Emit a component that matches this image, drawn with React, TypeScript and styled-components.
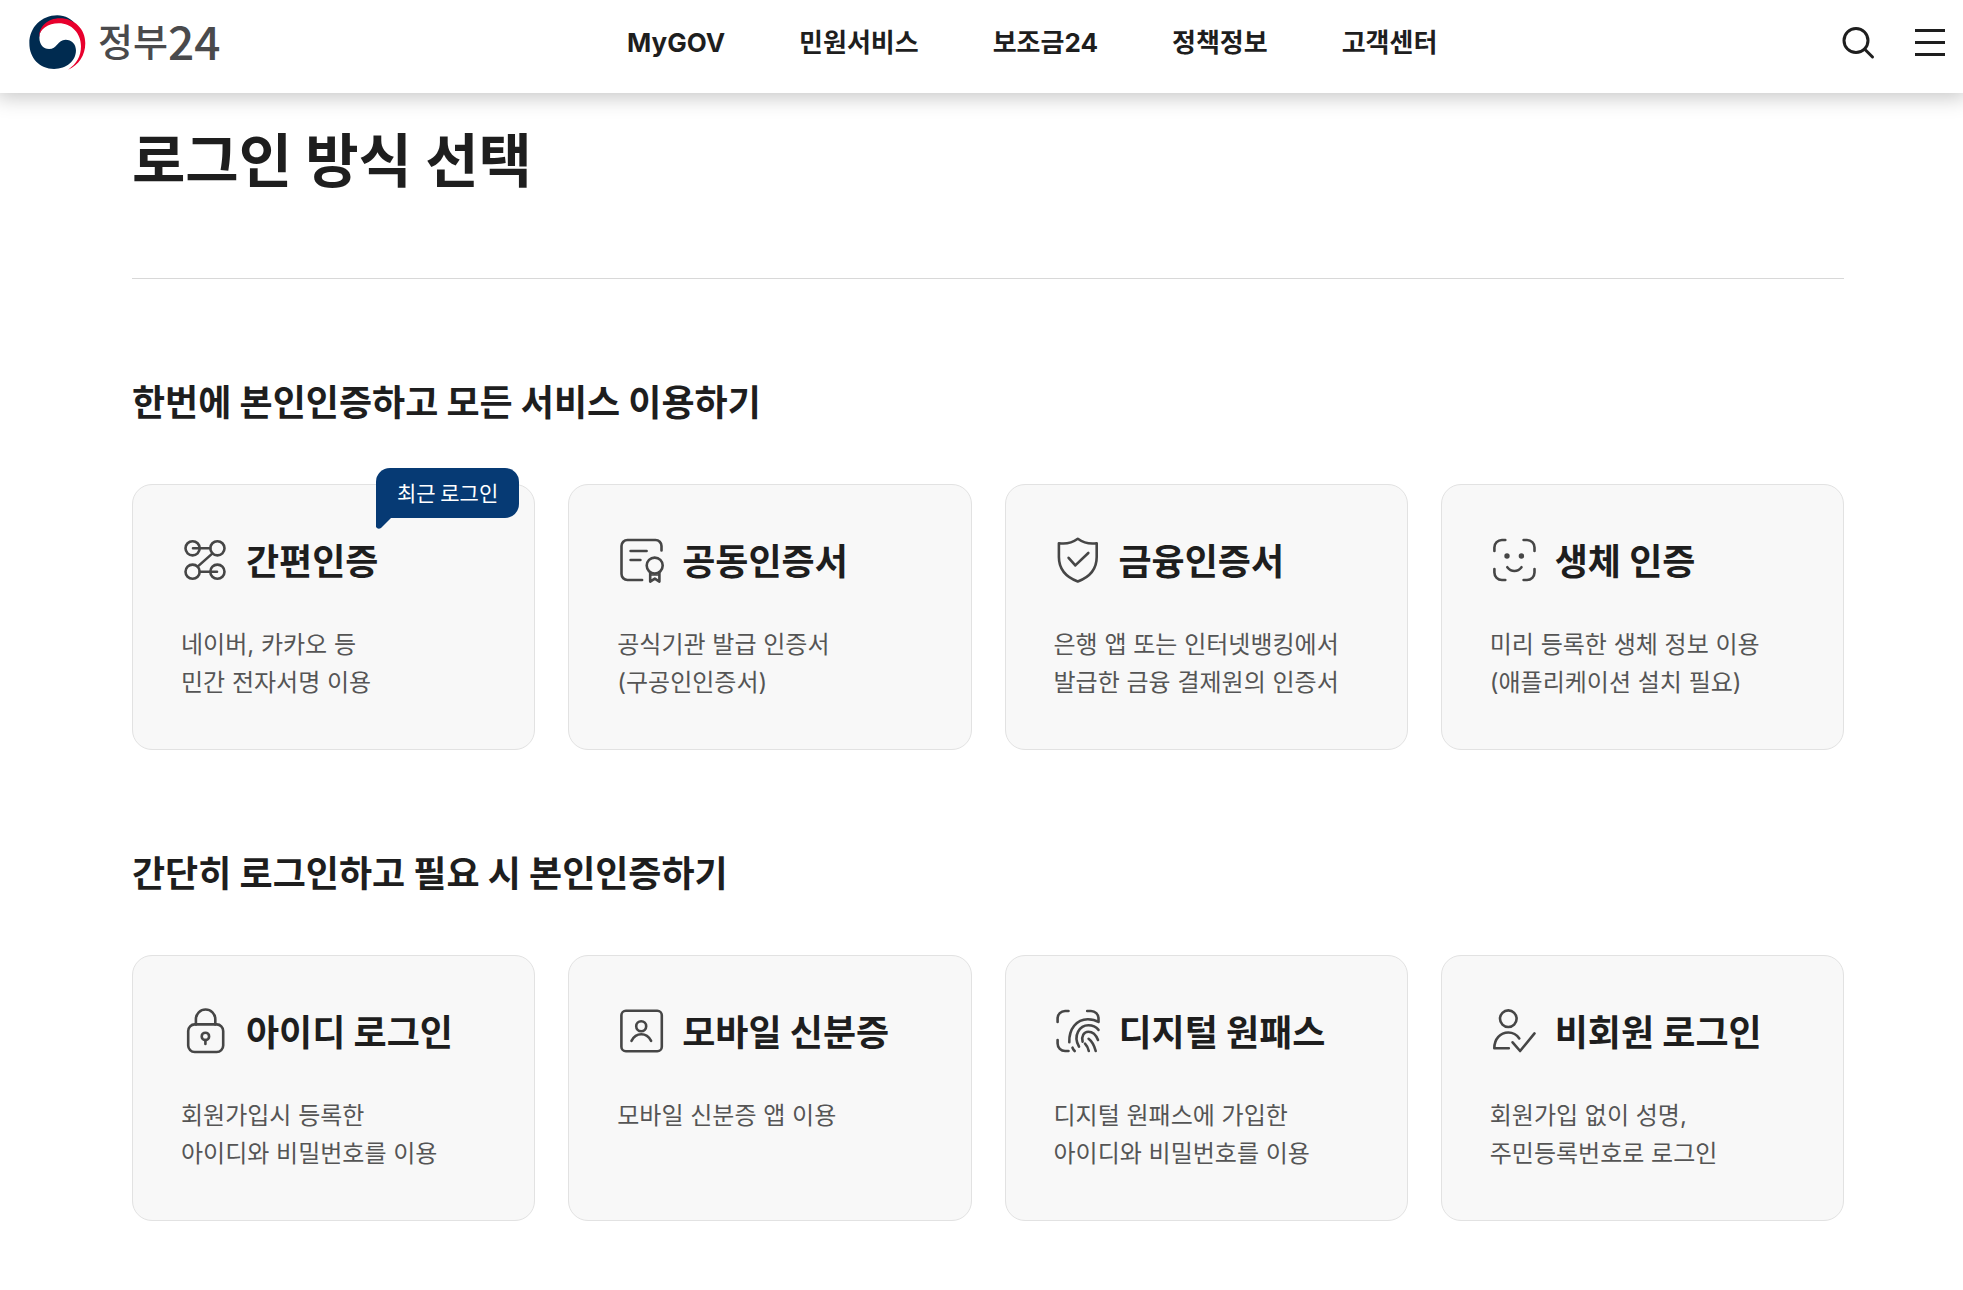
import React from 'react';
import styled, { createGlobalStyle } from 'styled-components';

const GlobalStyle = createGlobalStyle`
  *, *::before, *::after { box-sizing: border-box; }
  body {
    margin: 0;
    background: #ffffff;
    color: #1e1e1e;
    font-family: 'Noto Sans CJK KR', 'Noto Sans', sans-serif;
  }
  a { color: inherit; text-decoration: none; }
`;

const Header = styled.header`
  position: sticky;
  top: 0;
  z-index: 10;
  display: flex;
  align-items: center;
  justify-content: space-between;
  height: 93px;
  padding: 0 16px 8px 29px;
  background: #ffffff;
  box-shadow: 0 0 20px 4px rgba(0, 0, 0, 0.23);
`;

const Logo = styled.a`
  display: flex;
  align-items: center;
  gap: 12px;
  padding-right: 4px;
`;

const LogoName = styled.span`
  display: flex;
  align-items: center;
  padding-bottom: 6px;
  color: #4a4a4c;
  font-size: 38px;
  font-weight: 500;
  line-height: 54px;
`;

const LogoNumber = styled.span`
  font-size: 46px;
`;

const Nav = styled.nav`
  display: flex;
  gap: 74px;
  font-family: Inter, 'Noto Sans CJK KR', sans-serif;
  font-size: 26px;
  font-weight: 700;
  line-height: 40px;
`;

const Tools = styled.div`
  display: flex;
  gap: 35px;
`;

const IconButton = styled.button`
  display: flex;
  padding: 0;
  border: 0;
  background: none;
  color: #1e1e1e;
  cursor: pointer;
`;

const Main = styled.main`
  padding: 24px 119px 68px 132px;
`;

const Title = styled.h1`
  margin: 0;
  padding-bottom: 81px;
  border-bottom: 1px solid #d8d8d8;
  font-size: 58px;
  font-weight: 700;
  line-height: 80px;
`;

const Section = styled.section`
  padding-top: 94px;
`;

const SectionTitle = styled.h2`
  margin: 0 0 57px;
  font-size: 36px;
  font-weight: 700;
  line-height: 54px;
`;

const CardGrid = styled.div`
  display: grid;
  grid-template-columns: repeat(4, 1fr);
  gap: 33px;
`;

const Card = styled.a`
  position: relative;
  display: flex;
  flex-direction: column;
  gap: 40px;
  padding: 47px 48px;
  border: 1px solid #e2e2e2;
  border-radius: 20px;
  background: #f8f8f8;
`;

const CardHead = styled.div`
  display: flex;
  align-items: center;
  gap: 17px;
`;

const CardTitle = styled.h3`
  margin: 0;
  font-size: 36px;
  font-weight: 700;
  line-height: 54px;
  white-space: nowrap;
`;

const CardText = styled.p`
  margin: 0;
  color: #555555;
  font-family: Inter, 'Noto Sans CJK KR', sans-serif;
  font-size: 24px;
  font-weight: 400;
  line-height: 38px;
  white-space: pre-line;
`;

const Badge = styled.span`
  position: absolute;
  top: -17px;
  right: 15px;
  padding: 0 21px 2px;
  border-radius: 14px 14px 14px 0;
  background: #063a74;
  color: #ffffff;
  font-size: 21px;
  line-height: 48px;
`;

const BadgeTail = styled.svg`
  position: absolute;
  top: 100%;
  left: 0;
`;

const StrokeIcon = styled.svg`
  flex: none;
  fill: none;
  stroke: #464646;
  stroke-width: 2.6;
  stroke-linecap: round;
  stroke-linejoin: round;
`;

type IconName = 'simple' | 'joint' | 'finance' | 'face' | 'lock' | 'idcard' | 'finger' | 'guest';

const icons: Record<IconName, React.ReactNode> = {
  simple: (
    <>
      <circle cx="11.6" cy="12.3" r="7.1" />
      <circle cx="36.4" cy="12.3" r="7.1" />
      <circle cx="11.6" cy="35.7" r="7.1" />
      <circle cx="36.4" cy="35.7" r="7.1" />
      <path d="M12 12.3h17.3M18.7 35.7H36M31.5 17.4 16.6 30.6" />
    </>
  ),
  joint: (
    <>
      <path d="M44.5 14.5V10a6 6 0 0 0-6-6h-28a6 6 0 0 0-6 6v28a6 6 0 0 0 6 6h14.6" />
      <path d="M13.6 15h16M13.6 24h9.8" />
      <circle cx="37.7" cy="29.6" r="8" />
      <path d="M33.2 36.6v9l4.6-3 4.6 3v-9" />
      <path d="M33.6 39h8" strokeWidth="1.4" />
    </>
  ),
  finance: (
    <>
      <path d="M23.8 2.8C18.5 6.6 12 8.3 4.9 7.2V21c0 11.5 7.1 20.1 18.9 24.5C35.6 41.1 42.7 32.5 42.7 21V7.2C35.6 8.3 29.1 6.6 23.8 2.8Z" />
      <path d="m14.6 21.8 6.7 7.6L34.3 17" />
    </>
  ),
  face: (
    <>
      <path d="M4.4 15v-3.5A7.5 7.5 0 0 1 11.9 4h3.4M33.6 4H37a7.5 7.5 0 0 1 7.5 7.5V15M44.5 33v3.5A7.5 7.5 0 0 1 37 44h-3.4M15.3 44h-3.4a7.5 7.5 0 0 1-7.5-7.5V33" />
      <circle cx="17" cy="20" r="2.7" fill="#464646" stroke="none" />
      <circle cx="31.4" cy="20" r="2.7" fill="#464646" stroke="none" />
      <path d="M17.3 31.2c3.8 5 10.4 5 14.2 0" />
    </>
  ),
  lock: (
    <>
      <rect x="7.2" y="17.4" width="35" height="27.6" rx="6.5" />
      <path d="M14.9 17.4v-5.2a9.7 9.7 0 0 1 19.4 0v5.2" />
      <circle cx="24.4" cy="29.4" r="3.7" />
      <path d="M24.4 33.1v3.9" />
    </>
  ),
  idcard: (
    <>
      <rect x="4.4" y="3.8" width="40.4" height="40.4" rx="4.5" />
      <circle cx="24.2" cy="19.3" r="5" />
      <path d="M14.5 33.8c2.2-4.2 5.6-6.5 9.8-6.5s7.6 2.3 9.8 6.5" />
    </>
  ),
  finger: (
    <>
      <path d="M3.6 15v-3.5A7.5 7.5 0 0 1 11.1 4h3.4M33.2 4H37a7.5 7.5 0 0 1 7.5 7.5V14M14.5 44h-3.4a7.5 7.5 0 0 1-7.5-7.5V33" />
      <path d="M15.3 35.2C14.9 22 22.5 12.3 33.8 12.3c4.1 0 7.7.8 10.7 2.7" />
      <path d="M25 39.7C18.5 28 26 18.3 34.4 18.3c4.1 0 7.7 1.7 10.1 4.6" />
      <path d="M28.6 34.7c-1.4-5.3 1.3-10 5.7-10 5 0 8 3.8 9.7 8.3" />
      <path d="M34.6 31.8c3.6 2.6 5.7 6.9 7.1 12.2M31 36.7c1.8 1.9 3.1 4.3 3.8 7.3M18.5 40.7c.5 1.3 1.2 2.3 2.2 3.3" />
    </>
  ),
  guest: (
    <>
      <circle cx="18.3" cy="11.7" r="8.3" />
      <path d="M29.3 31.5c-2.7-4-6.600-6-11-6-8 0-14 6.500-14 15.800h14.500" />
      <path d="m22.600 35.300 7.500 8.700 14.400-17.600" />
    </>
  ),
};

interface LoginMethod {
  icon: IconName;
  title: string;
  text: string;
  recent?: boolean;
}

const sections: { id: string; title: string; methods: LoginMethod[] }[] = [
  {
    id: 'verified',
    title: '한번에 본인인증하고 모든 서비스 이용하기',
    methods: [
      { icon: 'simple', title: '간편인증', text: '네이버, 카카오 등\n민간 전자서명 이용', recent: true },
      { icon: 'joint', title: '공동인증서', text: '공식기관 발급 인증서\n(구공인인증서)' },
      { icon: 'finance', title: '금융인증서', text: '은행 앱 또는 인터넷뱅킹에서\n발급한 금융 결제원의 인증서' },
      { icon: 'face', title: '생체 인증', text: '미리 등록한 생체 정보 이용\n(애플리케이션 설치 필요)' },
    ],
  },
  {
    id: 'quick',
    title: '간단히 로그인하고 필요 시 본인인증하기',
    methods: [
      { icon: 'lock', title: '아이디 로그인', text: '회원가입시 등록한\n아이디와 비밀번호를 이용' },
      { icon: 'idcard', title: '모바일 신분증', text: '모바일 신분증 앱 이용' },
      { icon: 'finger', title: '디지털 원패스', text: '디지털 원패스에 가입한\n아이디와 비밀번호를 이용' },
      { icon: 'guest', title: '비회원 로그인', text: '회원가입 없이 성명,\n주민등록번호로 로그인' },
    ],
  },
];

const menu = ['MyGOV', '민원서비스', '보조금24', '정책정보', '고객센터'];

function Emblem() {
  return (
    <svg width="57" height="55" viewBox="81 43 159 165" preserveAspectRatio="none" aria-hidden="true">
      <path
        fill="#002b50"
        d="M215 76C201 55 182 44 160 44 116 44 82 80 82 128c0 45 29 77 69 77 35 0 61-24 61-56 0-19-12-32-29-32-22 0-24 28-46 28-16 0-27-14-27-34 0-30 23-54 55-54 20 0 36 7 50 19Z"
      />
      <path
        fill="#e8002d"
        d="M109 110C109 78 133 53 167 53c41 0 71 32 71 75 0 36-18 66-48 79 24-17 36-41 36-70 0-39-26-69-62-69-30 0-53 17-55 42Z"
      />
    </svg>
  );
}

export default function App() {
  return (
    <>
      <GlobalStyle />
      <Header>
        <Logo href="#home">
          <Emblem />
          <LogoName>
            정부<LogoNumber>24</LogoNumber>
          </LogoName>
        </Logo>
        <Nav>
          {menu.map((label) => (
            <a key={label} href="#menu">{label}</a>
          ))}
        </Nav>
        <Tools>
          <IconButton type="button" aria-label="검색">
            <svg width="36" height="36" viewBox="0 0 36 36" fill="none" stroke="currentColor" strokeWidth="3">
              <circle cx="16" cy="15.5" r="12" />
              <path d="m24.5 24 8 8" strokeLinecap="round" />
            </svg>
          </IconButton>
          <IconButton type="button" aria-label="전체메뉴">
            <svg width="36" height="36" viewBox="0 0 36 36" fill="none" stroke="currentColor" strokeWidth="3">
              <path d="M4 5.500h30M4 17.500h30M4 29.500h30" />
            </svg>
          </IconButton>
        </Tools>
      </Header>
      <Main>
        <Title>로그인 방식 선택</Title>
        {sections.map((section) => (
          <Section key={section.id} aria-labelledby={section.id}>
            <SectionTitle id={section.id}>{section.title}</SectionTitle>
            <CardGrid>
              {section.methods.map((method) => (
                <Card key={method.title} href="#login">
                  {method.recent && (
                    <Badge>
                      최근 로그인
                      <BadgeTail width="15" height="11" viewBox="0 0 15 11" aria-hidden="true">
                        <path d="M0 0h15L5 10Q2 12 0 9Z" fill="#063a74" />
                      </BadgeTail>
                    </Badge>
                  )}
                  <CardHead>
                    <StrokeIcon width="48" height="48" viewBox="0 -1 48 48" aria-hidden="true">
                      {icons[method.icon]}
                    </StrokeIcon>
                    <CardTitle>{method.title}</CardTitle>
                  </CardHead>
                  <CardText>{method.text}</CardText>
                </Card>
              ))}
            </CardGrid>
          </Section>
        ))}
      </Main>
    </>
  );
}
